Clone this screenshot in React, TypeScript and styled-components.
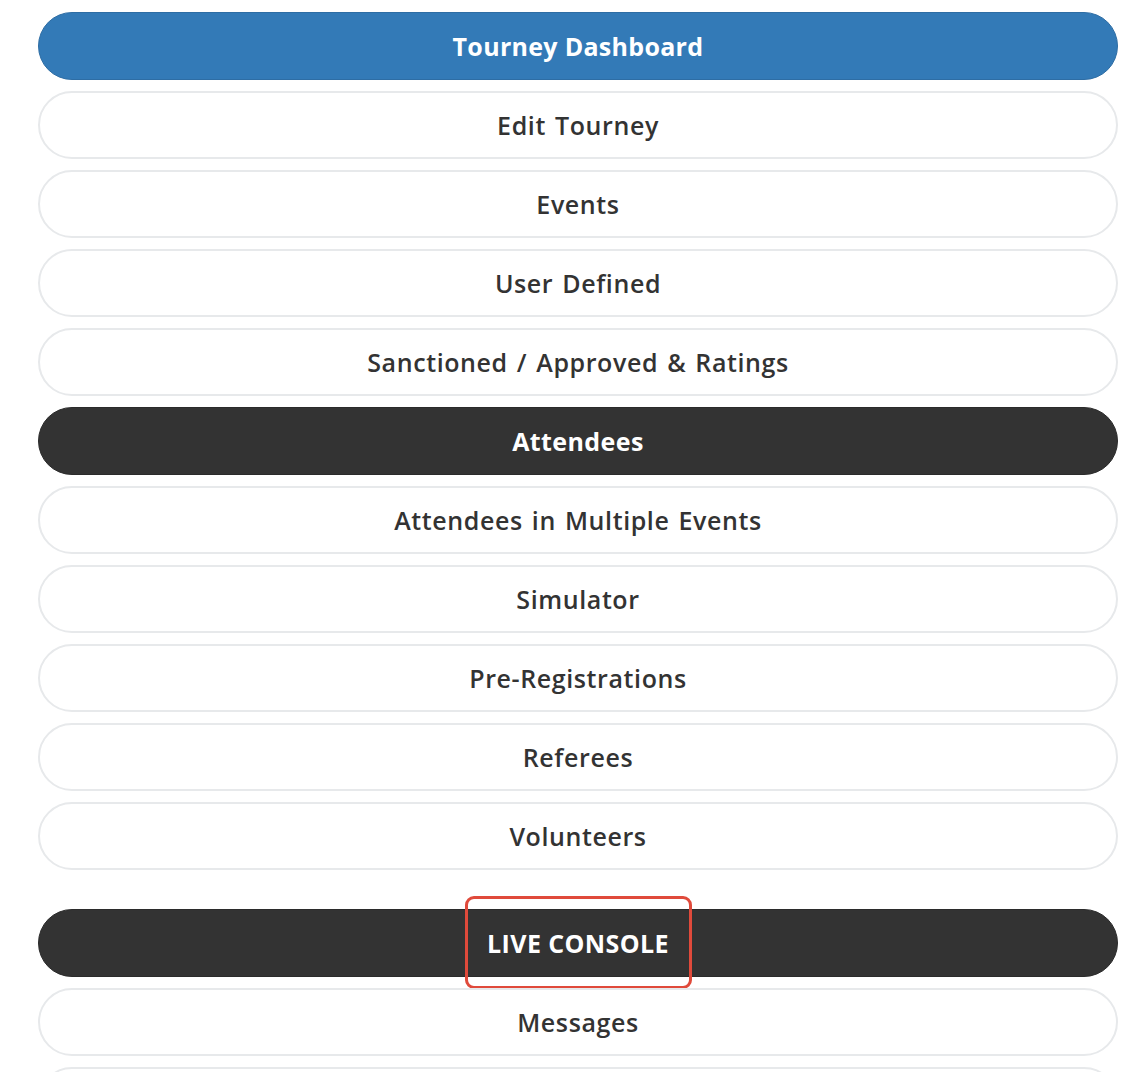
import React from "react";
import styled, { createGlobalStyle } from "styled-components";

const Global = createGlobalStyle`
  html, body { margin: 0; padding: 0; background: #fff; }
  body { font-family: "Open Sans", "Noto Sans", "Liberation Sans", sans-serif; }
`;

const Menu = styled.nav`
  display: flex;
  flex-direction: column;
  padding: 12px 23px 0 38px;
`;

const Group = styled.div<{ $gapTop?: number }>`
  display: flex;
  flex-direction: column;
  gap: 11px;
  margin-top: ${(p) => p.$gapTop ?? 0}px;
`;

type Variant = "primary" | "dark" | "default";

const Btn = styled.a<{ $variant: Variant }>`
  position: relative;
  box-sizing: border-box;
  display: flex;
  align-items: center;
  justify-content: center;
  height: 68px;
  border-radius: 34px;
  font-size: 25px;
  text-decoration: none;
  cursor: pointer;
  ${(p) =>
    p.$variant === "primary"
      ? `background:#337ab7;color:#fff;font-weight:700;letter-spacing:0.3px;border:1px solid #2e6da4;`
      : p.$variant === "dark"
      ? `background:#333;color:#fff;font-weight:700;letter-spacing:0.4px;border:1px solid #2b2b2b;`
      : `background:#fff;color:#333;font-weight:600;letter-spacing:0.6px;word-spacing:2px;border:2px solid #e7e9eb;`}
`;

const Highlight = styled.span`
  position: absolute;
  left: 426px;
  top: -14px;
  width: 227px;
  height: 93px;
  box-sizing: border-box;
  border: 3px solid #e04a3b;
  border-radius: 9px;
  pointer-events: none;
`;

const topItems: { label: string; variant: Variant }[] = [
  { label: "Tourney Dashboard", variant: "primary" },
  { label: "Edit Tourney", variant: "default" },
  { label: "Events", variant: "default" },
  { label: "User Defined", variant: "default" },
  { label: "Sanctioned / Approved & Ratings", variant: "default" },
  { label: "Attendees", variant: "dark" },
  { label: "Attendees in Multiple Events", variant: "default" },
  { label: "Simulator", variant: "default" },
  { label: "Pre-Registrations", variant: "default" },
  { label: "Referees", variant: "default" },
  { label: "Volunteers", variant: "default" },
];

const liveItems: { label: string; variant: Variant }[] = [
  { label: "Messages", variant: "default" },
  { label: "Scoreboard", variant: "default" },
];

export default function App() {
  return (
    <>
      <Global />
      <Menu>
        <Group>
          {topItems.map((it) => (
            <Btn key={it.label} $variant={it.variant}>
              {it.label}
            </Btn>
          ))}
        </Group>
        <Group $gapTop={39}>
          <Btn $variant="dark">
            LIVE CONSOLE
            <Highlight />
          </Btn>
          {liveItems.map((it) => (
            <Btn key={it.label} $variant={it.variant}>
              {it.label}
            </Btn>
          ))}
        </Group>
      </Menu>
    </>
  );
}
